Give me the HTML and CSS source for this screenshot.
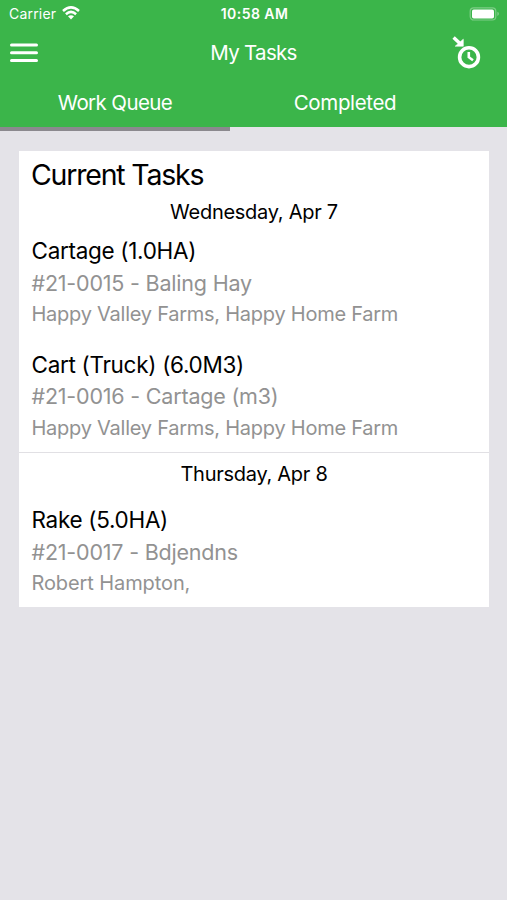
FILE: index.html
```html
<!DOCTYPE html>
<html lang="en">
<head>
<meta charset="utf-8">
<title>My Tasks</title>
<link rel="stylesheet" href="styles.css">
</head>
<body>
<header class="header">
  <div class="status">
    <div class="carrier"><span class="carrier-name">Carrier</span>
      <svg class="wifi" width="18" height="14" viewBox="0 0 18 14"><g fill="none" stroke="#fff" stroke-width="2.5"><path d="M1 5 Q9-2.2 17 5"/><path d="M3.9 8.2 Q9 3.6 14.1 8.2"/></g><path d="M6 10.3 Q9 8 12 10.3 L9 13.5Z" fill="#fff"/></svg>
    </div>
    <span class="clock">10:58 AM</span>
    <svg class="battery" width="31" height="14" viewBox="0 0 31 14"><rect x="1.2" y=".8" width="25.6" height="12.2" rx="3.5" fill="none" stroke="#7ecd87" stroke-width="1.2"/><rect x="3" y="2.5" width="22" height="9" rx="1.8" fill="#fff"/><path d="M28.3 4.7q1.7.5 1.7 2.1t-1.7 2.1z" fill="#7ecd87"/></svg>
  </div>
  <div class="bar">
    <svg class="menu" width="28" height="20" viewBox="0 0 28 20"><path d="M1.5 2h25M1.5 9.7h25M1.5 17.4h25" stroke="#fff" stroke-width="3" stroke-linecap="round"/></svg>
    <h1 class="title"><span>My Tasks</span></h1>
    <svg class="clock-in" width="30" height="34" viewBox="0 0 30 34"><g fill="none" stroke="#fff" stroke-width="3.6"><circle cx="18" cy="21.2" r="9.4"/><path d="M17.8 16v5.2l4.2 3" stroke-width="2.6"/><path d="M2.6 1.4l6.4 6" stroke-width="3.4"/></g><path d="M12.3 3.2v7H4.2z" fill="#fff" stroke="#fff" stroke-width=".6"/></svg>
  </div>
  <nav class="tabs"><div class="tab active"><span>Work Queue</span></div><div class="tab"><span>Completed</span></div></nav>
</header>
<main class="card">
  <h2 class="heading"><span>Current Tasks</span></h2>
  <section class="day">
    <h3 class="date"><span>Wednesday, Apr 7</span></h3>
    <article class="task"><p class="name"><span>Cartage (1.0HA)</span></p><p class="job"><span>#21-0015 - Baling Hay</span></p><p class="place"><span>Happy Valley Farms, Happy Home Farm</span></p></article>
    <article class="task"><p class="name"><span>Cart (Truck) (6.0M3)</span></p><p class="job"><span>#21-0016 - Cartage (m3)</span></p><p class="place"><span>Happy Valley Farms, Happy Home Farm</span></p></article>
  </section>
  <section class="day next">
    <h3 class="date"><span>Thursday, Apr 8</span></h3>
    <article class="task"><p class="name"><span>Rake (5.0HA)</span></p><p class="job"><span>#21-0017 - Bdjendns</span></p><p class="place"><span>Robert Hampton,</span></p></article>
  </section>
</main>
</body>
</html>
```
FILE: styles.css
```css
* { box-sizing: border-box; }
body { margin: 0; min-height: 900px; background: #e4e3e8; font-family: Inter, sans-serif; color: #000; }
h1, h2, h3, p { margin: 0; font-weight: 400; white-space: nowrap; }
svg { display: block; }
.header { height: 127px; background: #3bb54a; color: #fff; }
.status { display: grid; grid-template-columns: 1fr auto 1fr; align-items: center; height: 27px; padding: 0 7px 0 9px; font-size: 14px; }
.carrier { display: flex; gap: 6px; align-items: center; letter-spacing: .2px; }
.wifi { margin-bottom: 2px; }
.clock { font-weight: 600; letter-spacing: .45px; }
.battery { justify-self: end; }
.bar { display: grid; grid-template-columns: 1fr auto 1fr; align-items: center; height: 51px; padding: 0 10px; }
.title { font-size: 20.5px; letter-spacing: -.72px; line-height: 28px; }
.clock-in { justify-self: end; margin-right: 16px; }
.tabs { display: flex; height: 53px; }
.tab { width: 230px; height: 53px; font-size: 20.5px; line-height: 50px; text-align: center; letter-spacing: -.35px; }
.active { border-bottom: 4px solid #8b898e; letter-spacing: -.6px; }
.card { width: 470px; height: 456px; margin: 24px 0 0 19px; background: #fff; }
.heading { height: 48px; padding-left: 12px; font-size: 28.5px; letter-spacing: -1.2px; line-height: 48px; }
.day { height: 253px; }
.date { height: 26px; font-size: 20px; letter-spacing: -.27px; line-height: 26px; text-align: center; }
.task { height: 113.5px; padding: 11px 0 0 12.5px; line-height: 31.5px; }
.name { margin-bottom: 2px; font-size: 22.5px; letter-spacing: -.3px; line-height: 29.5px; }
.job { font-size: 21.5px; letter-spacing: -.2px; color: #929292; }
.place { font-size: 20px; letter-spacing: -.25px; color: #929292; }
.next { height: 155px; border-top: 1px solid #e1e0e4; }
.next .date { height: 46px; line-height: 42px; }
.next .task { padding-top: 6px; }
.next .place { letter-spacing: -.1px; }
```
